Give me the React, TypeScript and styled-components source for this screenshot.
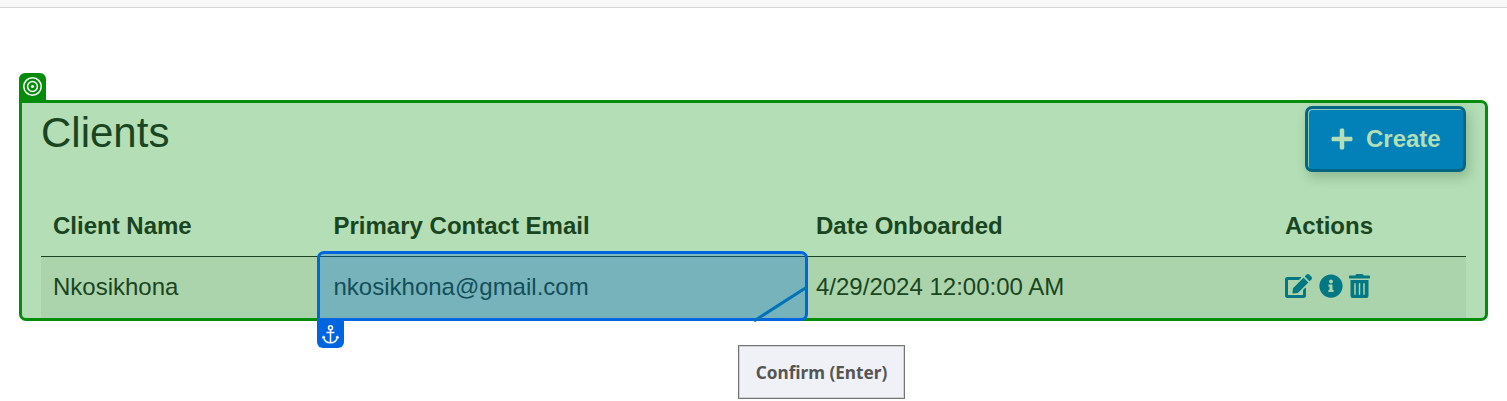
import React from "react";
import styled, { createGlobalStyle } from "styled-components";
import { FaEdit, FaInfoCircle, FaPlus, FaTrashAlt } from "react-icons/fa";

const GlobalStyle = createGlobalStyle`
  *, *::before, *::after { box-sizing: border-box; }
  body {
    margin: 0;
    background: #fff;
    color: #1a4521;
    font: 24px/36px "Liberation Sans", Arial, sans-serif;
    overflow: hidden;
  }
`;

const Page = styled.div`
  position: relative;
  height: 401px;
`;

const TopBar = styled.header`
  height: 8px;
  background: #f7f7f7;
  border-bottom: 1px solid #d5d5d5;
`;

const TargetPanel = styled.section`
  position: relative;
  margin: 92px 19px 0;
  height: 221px;
  padding: 3px 19px 0;
  border: 3px solid #058c0b;
  border-radius: 0 7px 7px 7px;
  background: #b4deb5;
`;

const Badge = styled.span<{ $tone: string; $place: "above" | "below" }>`
  position: absolute;
  left: -3px;
  ${(p) => (p.$place === "above" ? "bottom: 100%; border-radius: 6px 6px 0 0;" : "top: 100%; border-radius: 0 0 6px 6px;")}
  display: flex;
  align-items: center;
  justify-content: center;
  width: 27px;
  height: 30px;
  padding: ${(p) => (p.$place === "above" ? "0 0 3px" : "3px 0 0")};
  background: ${(p) => p.$tone};
`;

const PanelHeader = styled.div`
  display: flex;
  justify-content: space-between;
  align-items: flex-start;
  height: 90px;
`;

const Title = styled.h1`
  margin: 2px 0 0;
  font-size: 42px;
  line-height: 50px;
  font-weight: 400;
`;

const CreateButton = styled.button`
  display: flex;
  align-items: center;
  gap: 12.5px;
  width: 161px;
  height: 66px;
  padding: 0 0 1px 21.5px;
  border: 3px solid #036683;
  border-radius: 7px;
  background: #0280b8;
  color: #b4deb5;
  font: bold 24px/36px "Liberation Sans", Arial, sans-serif;
  box-shadow: inset 1px 1px 0 #8cc8bd, 3px 5px 12px rgba(20, 70, 30, 0.25);
`;

const Row = styled.div<{ $head?: boolean }>`
  display: grid;
  grid-template-columns: 280.5px 482.5px 469px 193px;
  height: 61px;
  align-items: center;
  padding-bottom: ${(p) => (p.$head ? 0 : 2)}px;
  font-weight: ${(p) => (p.$head ? 700 : 400)};
  background: ${(p) => (p.$head ? "transparent" : "#abd4ac")};
  border-bottom: ${(p) => (p.$head ? "1px solid #1a4521" : "0")};
`;

const Cell = styled.div`
  padding: 0 12px;
  white-space: nowrap;
`;

const Actions = styled.div`
  display: flex;
  gap: 6.7px;
  padding-bottom: 2px;
  color: #027884;

  svg {
    width: 24px;
    height: 24px;
  }
  svg:first-child {
    width: 27px;
  }
  svg:last-child {
    width: 21px;
  }
`;

const Anchor = styled.div`
  position: absolute;
  left: 317px;
  top: 251px;
  width: 491px;
  height: 70px;
  border: 3px solid #0066e0;
  border-radius: 7px 7px 7px 0;
  background: rgba(0, 102, 222, 0.3);
`;

const Connector = styled.svg`
  position: absolute;
  left: 751px;
  top: 284px;
`;

const ConfirmButton = styled.button`
  position: absolute;
  left: 738px;
  top: 345px;
  width: 167px;
  height: 54px;
  padding: 2px 0 0;
  border: 1px solid #747474;
  box-shadow: inset 0 0 0 1px #d2d2d4;
  background: #f0f1f7;
  color: #555;
  font: 700 17.2px/24px "Noto Sans", sans-serif;
  white-space: nowrap;
`;

const TargetIcon = () => (
  <svg width="21" height="21" viewBox="0 0 21 21" fill="none" stroke="#fff" strokeWidth="1.5">
    <circle cx="10.5" cy="10.5" r="8.7" />
    <circle cx="10.5" cy="10.5" r="4.9" />
    <circle cx="10.5" cy="10.5" r="1.6" fill="#fff" stroke="none" />
  </svg>
);

const AnchorIcon = () => (
  <svg width="19" height="21" viewBox="0 0 19 21" fill="none" stroke="#fff" strokeWidth="1.5">
    <circle cx="9.5" cy="3.7" r="2" />
    <path d="M9.5 5.7V19M5.5 8.5h8" />
    <path d="M2.5 12.8c.8 4 3.5 6 7 6s6.2-2 7-6" />
    <path d="M1.3 14.3l1.1-2 1.7 1.2M17.7 14.3l-1.1-2-1.7 1.2" strokeWidth="1.2" />
  </svg>
);

export default function App() {
  return (
    <Page>
      <GlobalStyle />
      <TopBar />
      <TargetPanel>
        <Badge $tone="#058c0b" $place="above"><TargetIcon /></Badge>
        <PanelHeader>
          <Title>Clients</Title>
          <CreateButton><FaPlus size={24} />Create</CreateButton>
        </PanelHeader>
        <Row $head>
          <Cell>Client Name</Cell>
          <Cell>Primary Contact Email</Cell>
          <Cell>Date Onboarded</Cell>
          <Cell>Actions</Cell>
        </Row>
        <Row>
          <Cell>Nkosikhona</Cell>
          <Cell>nkosikhona@gmail.com</Cell>
          <Cell>4/29/2024 12:00:00 AM</Cell>
          <Cell>
            <Actions>
              <FaEdit />
              <FaInfoCircle />
              <FaTrashAlt />
            </Actions>
          </Cell>
        </Row>
      </TargetPanel>
      <Anchor>
        <Badge $tone="#0066e0" $place="below"><AnchorIcon /></Badge>
      </Anchor>
      <Connector width="58" height="40" viewBox="0 0 58 40">
        <path d="M3 37L56 3" stroke="#0072b8" strokeWidth="3" />
      </Connector>
      <ConfirmButton>Confirm (Enter)</ConfirmButton>
    </Page>
  );
}
